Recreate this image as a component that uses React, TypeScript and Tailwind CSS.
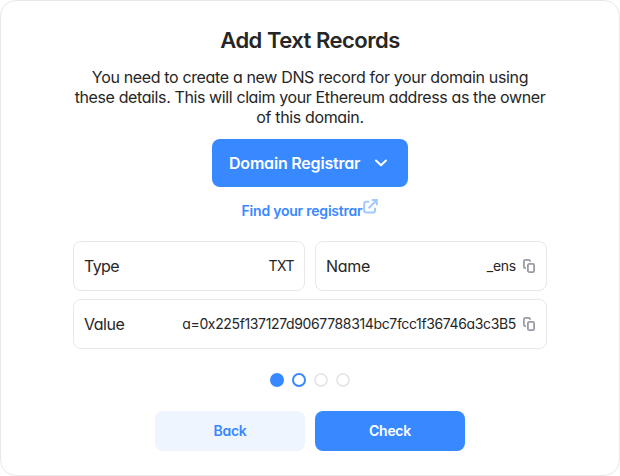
function CopyIcon() {
  return (
    <svg width="12" height="14" viewBox="0 0 12 14" fill="none" stroke="#9b9ba7" strokeWidth="1.8" className="ml-[7px] mr-px shrink-0">
      <rect x="4.9" y="4.9" width="6.2" height="8.2" rx="1.4" />
      <path d="M3 9.1H2.3A1.4 1.4 0 0 1 .9 7.7V2.3A1.4 1.4 0 0 1 2.3.9H5.7A1.4 1.4 0 0 1 7.1 2.3V2.8" />
    </svg>
  );
}

function Field({ label, labelClass, value, valueClass, copy }: { label: string; labelClass: string; value: string; valueClass: string; copy?: boolean }) {
  return (
    <div className="flex h-[50px] flex-1 items-center justify-between rounded-[8px] border border-[#e8e8e8] px-[10px]">
      <span className={"text-[16px] " + labelClass}>{label}</span>
      <span className="flex items-center">
        <span className={"whitespace-nowrap pb-px text-[14px] leading-[20px] " + valueClass}>{value}</span>
        {copy && <CopyIcon />}
      </span>
    </div>
  );
}

export default function App() {
  return (
    <main className="flex h-[476px] w-[620px] flex-col items-center rounded-[16px] border border-[#e8e8e8] bg-white pt-[25px] font-['Inter',sans-serif] text-[#262626] [font-feature-settings:'cv11']">
      <h1 className="h-[28px] whitespace-nowrap text-[22px] font-semibold leading-[28px] tracking-[-0.5px]">Add Text Records</h1>
      <p className="mt-[13px] flex flex-col items-center whitespace-nowrap text-[16px] leading-[20px]">
        <span className="tracking-[-0.35px]">You need to create a new DNS record for your domain using</span>
        <span className="tracking-[-0.39px]">these details. This will claim your Ethereum address as the owner</span>
        <span className="tracking-[-0.35px]">of this domain.</span>
      </p>
      <button className="mt-[12px] flex h-[48px] w-[196px] items-center justify-between rounded-[8px] bg-[#3888ff] pl-[17px] pr-[20px] text-white">
        <span className="whitespace-nowrap text-[16px] font-semibold tracking-[-0.2px]">Domain Registrar</span>
        <svg width="14" height="8" viewBox="0 0 14 8" fill="none" stroke="currentColor" strokeWidth="2" strokeLinecap="round" strokeLinejoin="round">
          <path d="M2 1.5L7 6.3L12 1.5" />
        </svg>
      </button>
      <a className="mt-[12px] flex h-[24px] items-start text-[#3888ff]">
        <span className="whitespace-nowrap text-[14px] font-semibold leading-[24px] tracking-[-0.22px]">Find your registrar</span>
        <svg width="15" height="15" viewBox="0 0 15 15" fill="none" stroke="#a3c8ff" strokeWidth="2" className="ml-px">
          <path d="M6.2 2.8H3.2A2 2 0 0 0 1.2 4.8V11.4A2 2 0 0 0 3.2 13.4H10A2 2 0 0 0 12 11.4V8.7M5.6 9.2L13.3 1.5M8.7 1H13.8V6.2" />
        </svg>
      </a>
      <section className="mt-[18px] flex w-[474px] flex-col gap-[8px]">
        <div className="flex gap-[10px]">
          <Field label="Type" labelClass="tracking-[-0.6px]" value="TXT" valueClass="tracking-[-0.5px]" />
          <Field label="Name" labelClass="tracking-[-0.3px]" value="_ens" valueClass="tracking-[-0.25px]" copy />
        </div>
        <div className="flex">
          <Field label="Value" labelClass="tracking-[-0.45px]" value="a=0x225f137127d9067788314bc7fcc1f36746a3c3B5" valueClass="tracking-[-0.36px]" copy />
        </div>
      </section>
      <div className="mt-[24px] flex gap-[8px]">
        <i className="size-[14px] rounded-full bg-[#3888ff]" />
        <i className="size-[14px] rounded-full border-2 border-[#3888ff]" />
        <i className="size-[14px] rounded-full border-2 border-[#e8e8e8]" />
        <i className="size-[14px] rounded-full border-2 border-[#e8e8e8]" />
      </div>
      <div className="mt-[24px] flex gap-[10px] text-[14px] font-semibold leading-[20px] tracking-[-0.3px]">
        <button className="h-[40px] w-[150px] rounded-[8px] bg-[#eef5ff] pb-px text-[#3888ff]">Back</button>
        <button className="h-[40px] w-[150px] rounded-[8px] bg-[#3888ff] pb-px text-white">Check</button>
      </div>
    </main>
  );
}
